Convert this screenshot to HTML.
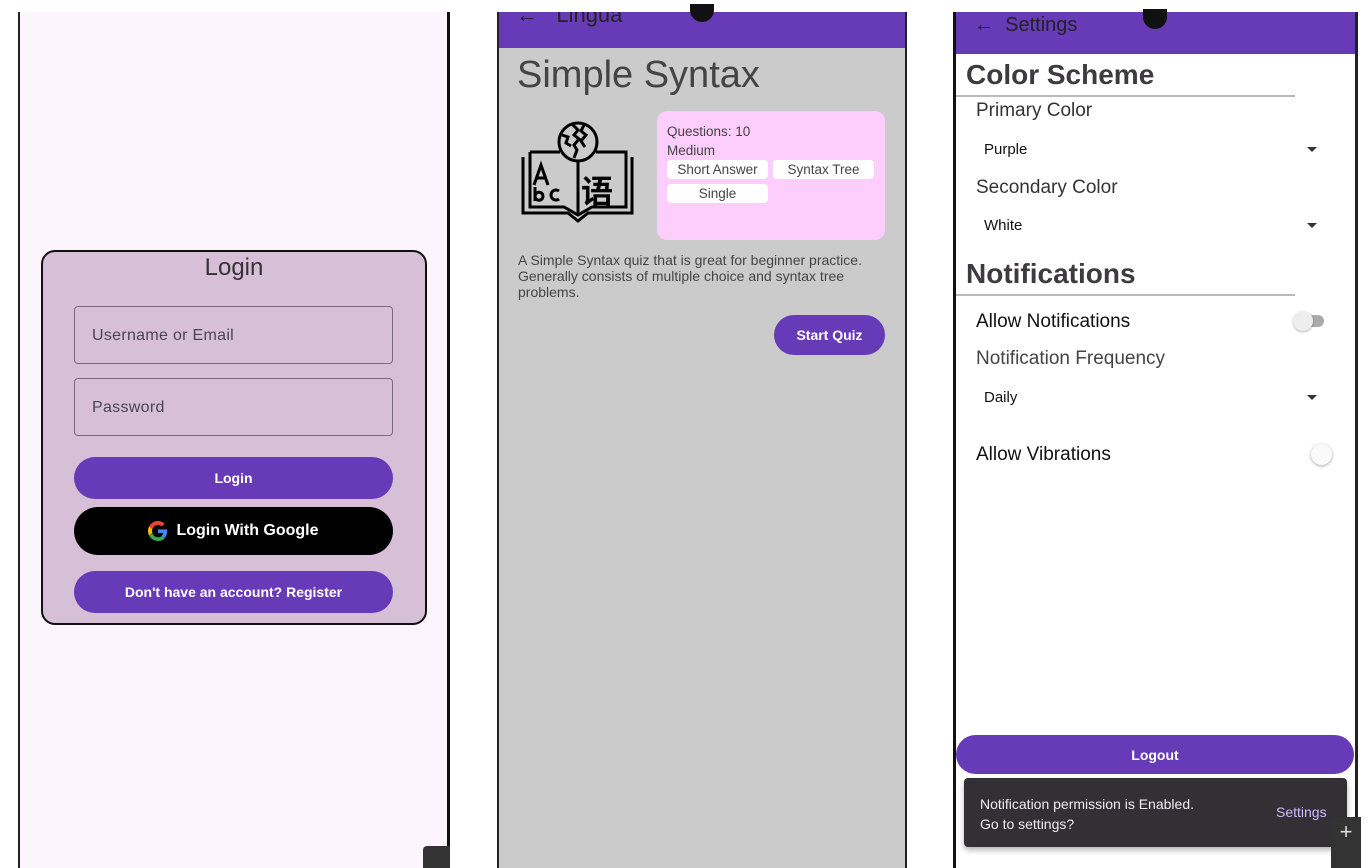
<!DOCTYPE html>
<html><head><meta charset="utf-8"><style>
*{margin:0;padding:0;box-sizing:border-box}
body{width:1372px;height:868px;background:#fff;position:relative;overflow:hidden;font-family:"Liberation Sans",Roboto,sans-serif}
.a{position:absolute}
.c{display:flex;align-items:center;justify-content:center}
</style></head><body>
<!-- Panel 1 -->
<div class="a" style="left:18px;top:12px;width:432px;height:856px;background:#fcf5fe;border-left:2px solid #222;border-right:3px solid #111"></div>
<div class="a" style="left:41px;top:250px;width:386px;height:375px;background:#d7bfd8;border:2px solid #111;border-radius:14px"></div>
<div class="a" style="left:41px;top:254px;width:386px;text-align:center;font-size:24px;color:#333">Login</div>
<div class="a" style="left:74px;top:306px;width:319px;height:58px;border:1px solid #7a6a7e;border-radius:4px;font-size:16px;color:#4a4450;padding:20px 0 0 17px;letter-spacing:.3px">Username or Email</div>
<div class="a" style="left:74px;top:378px;width:319px;height:58px;border:1px solid #7a6a7e;border-radius:4px;font-size:16px;color:#4a4450;padding:20px 0 0 17px;letter-spacing:.3px">Password</div>
<div class="a c" style="left:74px;top:457px;width:319px;height:42px;background:#673ab7;border-radius:21px;color:#fff;font-size:14px;font-weight:bold">Login</div>
<div class="a c" style="left:74px;top:507px;width:319px;height:48px;background:#000;border-radius:24px;color:#fff;font-size:16px;font-weight:bold">
<svg width="20" height="20" viewBox="0 0 48 48" style="margin-right:8px"><path fill="#EA4335" d="M24 9.5c3.5 0 6.6 1.2 9.1 3.6l6.8-6.8C35.8 2.4 30.2 0 24 0 14.6 0 6.6 5.4 2.7 13.3l7.9 6.1C12.5 13.6 17.8 9.5 24 9.5z"/><path fill="#4285F4" d="M46.1 24.5c0-1.6-.1-3.1-.4-4.5H24v9h12.4c-.5 2.9-2.200 5.3-4.6 7l7.2 5.6c4.2-3.9 7.1-9.7 7.1-17.1z"/><path fill="#FBBC05" d="M10.5 28.6c-.5-1.4-.8-3-.8-4.6s.3-3.2.8-4.6l-7.9-6.1C1 16.5 0 20.1 0 24s1 7.5 2.7 10.7l7.8-6.1z"/><path fill="#34A853" d="M24 48c6.5 0 11.9-2.1 15.9-5.8l-7.2-5.6c-2.2 1.5-5.1 2.4-8.7 2.4-6.2 0-11.5-4.1-13.4-9.9l-7.9 6.1C6.6 42.6 14.6 48 24 48z"/></svg>Login With Google</div>
<div class="a c" style="left:74px;top:571px;width:319px;height:42px;background:#673ab7;border-radius:21px;color:#fff;font-size:14px;font-weight:bold">Don't have an account? Register</div>
<div class="a" style="left:423px;top:846px;width:27px;height:22px;background:#333;border-radius:4px 0 0 0"></div>

<!-- Panel 2 -->
<div class="a" style="left:497px;top:12px;width:410px;height:856px;background:#cbcbcb;border-left:2px solid #222;border-right:2px solid #222"></div>
<div class="a" style="left:499px;top:12px;width:406px;height:36px;background:#673ab7"></div>
<div class="a" style="left:516px;top:2px;font-size:22px;color:#222;clip-path:inset(10px 0 0 0)">←&nbsp;&nbsp; Lingua</div>
<div class="a" style="left:690px;top:4px;width:24px;height:18px;border-radius:0 0 12px 12px;background:#111"></div>
<div class="a" style="left:517px;top:54px;font-size:38px;color:#444">Simple Syntax</div>
<svg class="a" style="left:510px;top:115px" width="135" height="120" viewBox="0 0 135 120" fill="none" stroke="#000" stroke-width="3">
<circle cx="68" cy="27" r="19"/>
<path d="M62 9 l6 6 -4 5 5 4 -5 6 3 5 -3 8"/><path d="M74 10 l-3 6 5 4 -5 6 4 6"/><path d="M52 20 l6 2 -2 6 5 3"/>
<path d="M13 42 V98 H58 L68 106 L78 98 H122 V42"/>
<path d="M20 37 V92 H54 L68 100 L82 92 H116 V37 H86"/><path d="M20 37 H50"/>
<path d="M68 46 V100"/>
<path d="M24 70 L31 50 L38 70 M26.5 63 H35.5" stroke-width="3"/>
<path d="M25 72 V86 M25 81 a4 4 0 1 1 0 .5" stroke-width="3"/>
<path d="M49 76 a5 5 0 1 0 0 8" stroke-width="3"/>
<text x="71" y="88" font-size="32" fill="#000" stroke="none" font-family="Noto Sans CJK SC,sans-serif" font-weight="bold">语</text>
</svg>
<div class="a" style="left:657px;top:111px;width:228px;height:129px;background:#fdcdfc;border-radius:10px"></div>
<div class="a" style="left:667px;top:122px;font-size:13.5px;color:#444;line-height:19px">Questions: 10<br>Medium</div>
<div class="a c" style="left:667px;top:160px;width:101px;height:19px;background:#fff;border-radius:4px;font-size:13.5px;color:#444">Short Answer</div>
<div class="a c" style="left:773px;top:160px;width:101px;height:19px;background:#fff;border-radius:4px;font-size:13.5px;color:#444">Syntax Tree</div>
<div class="a c" style="left:667px;top:184px;width:101px;height:19px;background:#fff;border-radius:4px;font-size:13.5px;color:#444">Single</div>
<div class="a" style="left:518px;top:252px;width:355px;font-size:14px;color:#444;line-height:16px">A Simple Syntax quiz that is great for beginner practice. Generally consists of multiple choice and syntax tree problems.</div>
<div class="a c" style="left:774px;top:315px;width:111px;height:40px;background:#673ab7;border-radius:20px;color:#fff;font-size:14px;font-weight:bold">Start Quiz</div>

<!-- Panel 3 -->
<div class="a" style="left:953px;top:12px;width:405px;height:856px;background:#fff;border-left:3px solid #111;border-right:3px solid #222"></div>
<div class="a" style="left:956px;top:12px;width:399px;height:42px;background:#673ab7"></div>
<div class="a" style="left:974px;top:12px;font-size:20px;color:#222;line-height:26px">←&nbsp;&nbsp;Settings</div>
<div class="a" style="left:1143px;top:9px;width:24px;height:20px;border-radius:0 0 12px 12px;background:#111"></div>
<div class="a" style="left:966px;top:59px;font-size:28px;font-weight:bold;color:#3d3a40">Color Scheme</div>
<div class="a" style="left:956px;top:95px;width:339px;height:2px;background:#bbb"></div>
<div class="a" style="left:976px;top:100px;font-size:19px;color:#333">Primary Color</div>
<div class="a" style="left:984px;top:141px;font-size:15px;color:#111">Purple</div>
<div class="a" style="left:1307px;top:147px;border:5px solid transparent;border-top:5px solid #333"></div>
<div class="a" style="left:976px;top:177px;font-size:19px;color:#333">Secondary Color</div>
<div class="a" style="left:984px;top:217px;font-size:15px;color:#111">White</div>
<div class="a" style="left:1307px;top:223px;border:5px solid transparent;border-top:5px solid #333"></div>
<div class="a" style="left:966px;top:258px;font-size:28px;font-weight:bold;color:#3d3a40">Notifications</div>
<div class="a" style="left:956px;top:294px;width:339px;height:2px;background:#bbb"></div>
<div class="a" style="left:976px;top:311px;font-size:19px;color:#111">Allow Notifications</div>
<div class="a" style="left:1296px;top:315px;width:28px;height:12px;border-radius:6px;background:#aaa"></div>
<div class="a" style="left:1293px;top:311px;width:20px;height:20px;border-radius:50%;background:#eee;box-shadow:0 1px 2px rgba(0,0,0,.3)"></div>
<div class="a" style="left:976px;top:348px;font-size:19px;color:#444">Notification Frequency</div>
<div class="a" style="left:984px;top:389px;font-size:15px;color:#111">Daily</div>
<div class="a" style="left:1307px;top:395px;border:5px solid transparent;border-top:5px solid #333"></div>
<div class="a" style="left:976px;top:444px;font-size:19px;color:#111">Allow Vibrations</div>
<div class="a" style="left:1311px;top:444px;width:21px;height:21px;border-radius:50%;background:#fafafa;box-shadow:0 1px 3px rgba(0,0,0,.35)"></div>
<div class="a c" style="left:956px;top:735px;width:398px;height:39px;background:#673ab7;border-radius:20px;color:#fff;font-size:14px;font-weight:bold">Logout</div>
<div class="a" style="left:964px;top:778px;width:383px;height:69px;background:#322f35;border-radius:4px;box-shadow:0 3px 6px rgba(0,0,0,.3)"></div>
<div class="a" style="left:980px;top:794px;font-size:14px;color:#eee;line-height:20px">Notification permission is Enabled.<br>Go to settings?</div>
<div class="a" style="left:1276px;top:804px;font-size:14px;color:#d0bcff">Settings</div>
<div class="a c" style="left:1331px;top:817px;width:30px;height:51px;background:#333;border-radius:4px 0 0 0;color:#ddd;font-size:22px;align-items:flex-start;padding-top:2px">+</div>
</body></html>
